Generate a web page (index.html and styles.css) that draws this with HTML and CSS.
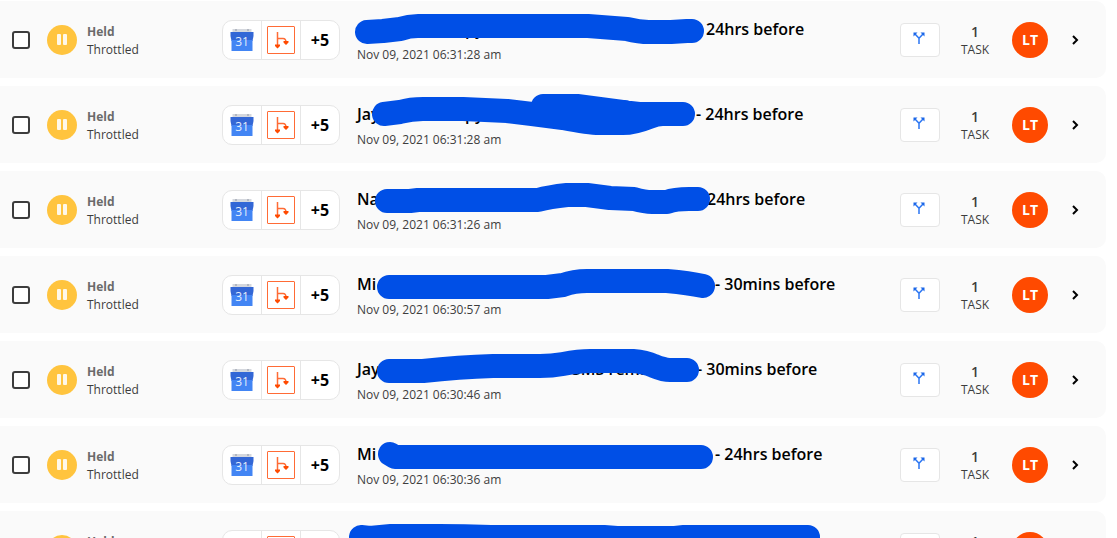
FILE: index.html
```html
<!DOCTYPE html>
<html lang="en">
<head>
    <meta charset="UTF-8">
    <meta name="viewport" content="width=device-width, initial-scale=1.0">
    <title>Task History</title>
    <link rel="stylesheet" href="styles.css">
</head>
<body>
    <!-- Shared icons -->
    <svg class="sprite" aria-hidden="true">
        <symbol id="icon-calendar" viewBox="0 0 24 24">
            <path fill="#d5d8de" d="M2.5 1h19v5h-19z"/>
            <path fill="#b3b8c2" d="M5 1h2v2H5zM17 1h2v2h-2z"/>
            <path fill="#3367d6" d="M.5 4h23v4l-1 5h-21l-1-5z"/>
            <path fill="#4285f4" d="M1.5 12h21v11h-21z"/>
            <text x="12" y="18" text-anchor="middle" class="calendar-day">31</text>
        </symbol>
        <symbol id="icon-path" viewBox="0 0 26 26">
            <path fill="none" stroke="#ff6b35" stroke-width="1.5" d="M9.5 5v14M9.5 11.5h5.5q3 0 3 4"/>
            <path fill="#ff4a00" d="M7 17.5h5v1.5l-2.5 2.5L7 19zM15.500 14h5v1.500l-2.500 2.500-2.500-2.500z"/>
        </symbol>
        <symbol id="icon-split" viewBox="0 0 12 12">
            <path fill="none" stroke="#2a75f3" stroke-width="1.5" d="M2 2l4 4.3V12M6 6.300L10 2"/>
            <path fill="#1a66e8" d="M.5.5h4l-4 4zM11.500.5h-4l4 4z"/>
        </symbol>
        <symbol id="icon-chevron" viewBox="0 0 12 12">
            <path fill="none" stroke="#000" stroke-width="2" d="M4 2l4 4-4 4"/>
        </symbol>
    </svg>

    <main class="runs">
        <div class="run">
            <input type="checkbox" class="run-check" aria-label="Select run">
            <div class="pause"></div>
            <div class="status"><strong>Held</strong><span>Throttled</span></div>
            <div class="apps">
                <span class="app"><svg class="calendar"><use href="#icon-calendar"/></svg></span>
                <span class="app"><svg class="path"><use href="#icon-path"/></svg></span>
                <span class="app">+5</span>
            </div>
            <div class="info">
                <div class="title"><span class="part w-108"></span><span class="part w-241">py</span>24hrs before</div>
                <div class="date">Nov 09, 2021 06:31:28 am</div>
                <svg class="marker" viewBox="0 0 480 77"><path d="M18 31L34 30 51 28Q60 25 69 25H239L278 28Q290 31 300 31H322L338 30H343"/></svg>
            </div>
            <button type="button" class="split" aria-label="Paths"><svg><use href="#icon-split"/></svg></button>
            <div class="tasks"><strong>1</strong><span>TASK</span></div>
            <div class="avatar">LT</div>
            <a href="#" class="open" aria-label="Open run"><svg><use href="#icon-chevron"/></svg></a>
        </div>

        <div class="run">
            <input type="checkbox" class="run-check" aria-label="Select run">
            <div class="pause"></div>
            <div class="status"><strong>Held</strong><span>Throttled</span></div>
            <div class="apps">
                <span class="app"><svg class="calendar"><use href="#icon-calendar"/></svg></span>
                <span class="app"><svg class="path"><use href="#icon-path"/></svg></span>
                <span class="app">+5</span>
            </div>
            <div class="info">
                <div class="title"><span class="part w-108">Jay</span><span class="part w-231">py</span>- 24hrs before</div>
                <div class="date">Nov 09, 2021 06:31:28 am</div>
                <svg class="marker" viewBox="0 0 480 77"><path d="M35 28L51 26Q62 23 74 23H114L158 25 183 28 214 32Q240 37 250 37H274Q285 37 300 31 308 28 314 28H334M194 20H228L281 27 290 28H334M200 26H276"/></svg>
            </div>
            <button type="button" class="split" aria-label="Paths"><svg><use href="#icon-split"/></svg></button>
            <div class="tasks"><strong>1</strong><span>TASK</span></div>
            <div class="avatar">LT</div>
            <a href="#" class="open" aria-label="Open run"><svg><use href="#icon-chevron"/></svg></a>
        </div>

        <div class="run">
            <input type="checkbox" class="run-check" aria-label="Select run">
            <div class="pause"></div>
            <div class="status"><strong>Held</strong><span>Throttled</span></div>
            <div class="apps">
                <span class="app"><svg class="calendar"><use href="#icon-calendar"/></svg></span>
                <span class="app"><svg class="path"><use href="#icon-path"/></svg></span>
                <span class="app">+5</span>
            </div>
            <div class="info">
                <div class="title"><span class="part w-350">Na</span>24hrs before</div>
                <div class="date">Nov 09, 2021 06:31:26 am</div>
                <svg class="marker" viewBox="0 0 480 77"><path d="M38 30H61L69 29H189Q200 26 218 24H238L261 27 285 28Q296 31 303 31H318Q326 28 340 28H349"/></svg>
            </div>
            <button type="button" class="split" aria-label="Paths"><svg><use href="#icon-split"/></svg></button>
            <div class="tasks"><strong>1</strong><span>TASK</span></div>
            <div class="avatar">LT</div>
            <a href="#" class="open" aria-label="Open run"><svg><use href="#icon-chevron"/></svg></a>
        </div>

        <div class="run">
            <input type="checkbox" class="run-check" aria-label="Select run">
            <div class="pause"></div>
            <div class="status"><strong>Held</strong><span>Throttled</span></div>
            <div class="apps">
                <span class="app"><svg class="calendar"><use href="#icon-calendar"/></svg></span>
                <span class="app"><svg class="path"><use href="#icon-path"/></svg></span>
                <span class="app">+5</span>
            </div>
            <div class="info">
                <div class="title"><span class="part w-358">Mi</span>- 30mins before</div>
                <div class="date">Nov 09, 2021 06:30:57 am</div>
                <svg class="marker" viewBox="0 0 480 77"><path d="M40 31H198L214 29Q225 25 238 25H318Q340 27 354 30"/></svg>
            </div>
            <button type="button" class="split" aria-label="Paths"><svg><use href="#icon-split"/></svg></button>
            <div class="tasks"><strong>1</strong><span>TASK</span></div>
            <div class="avatar">LT</div>
            <a href="#" class="open" aria-label="Open run"><svg><use href="#icon-chevron"/></svg></a>
        </div>

        <div class="run">
            <input type="checkbox" class="run-check" aria-label="Select run">
            <div class="pause"></div>
            <div class="status"><strong>Held</strong><span>Throttled</span></div>
            <div class="apps">
                <span class="app"><svg class="calendar"><use href="#icon-calendar"/></svg></span>
                <span class="app"><svg class="path"><use href="#icon-path"/></svg></span>
                <span class="app">+5</span>
            </div>
            <div class="info">
                <div class="title"><span class="part w-215">Jay</span><span class="part w-125">SMS reminder</span>- 30mins before</div>
                <div class="date">Nov 09, 2021 06:30:46 am</div>
                <svg class="marker" viewBox="0 0 480 77"><path d="M40 30H74Q110 26 144 25H191Q203 25 214 23 230 20 241 20H284Q296 21 305 25 315 29 321 29H338"/></svg>
            </div>
            <button type="button" class="split" aria-label="Paths"><svg><use href="#icon-split"/></svg></button>
            <div class="tasks"><strong>1</strong><span>TASK</span></div>
            <div class="avatar">LT</div>
            <a href="#" class="open" aria-label="Open run"><svg><use href="#icon-chevron"/></svg></a>
        </div>

        <div class="run">
            <input type="checkbox" class="run-check" aria-label="Select run">
            <div class="pause"></div>
            <div class="status"><strong>Held</strong><span>Throttled</span></div>
            <div class="apps">
                <span class="app"><svg class="calendar"><use href="#icon-calendar"/></svg></span>
                <span class="app"><svg class="path"><use href="#icon-path"/></svg></span>
                <span class="app">+5</span>
            </div>
            <div class="info">
                <div class="title"><span class="part w-358">Mi</span>- 24hrs before</div>
                <div class="date">Nov 09, 2021 06:30:36 am</div>
                <svg class="marker" viewBox="0 0 480 77"><path d="M41 28L46 31H352"/></svg>
            </div>
            <button type="button" class="split" aria-label="Paths"><svg><use href="#icon-split"/></svg></button>
            <div class="tasks"><strong>1</strong><span>TASK</span></div>
            <div class="avatar">LT</div>
            <a href="#" class="open" aria-label="Open run"><svg><use href="#icon-chevron"/></svg></a>
        </div>

        <div class="run">
            <input type="checkbox" class="run-check" aria-label="Select run">
            <div class="pause"></div>
            <div class="status"><strong>Held</strong><span>Throttled</span></div>
            <div class="apps">
                <span class="app"><svg class="calendar"><use href="#icon-calendar"/></svg></span>
                <span class="app"><svg class="path"><use href="#icon-path"/></svg></span>
                <span class="app">+5</span>
            </div>
            <div class="info">
                <svg class="marker" viewBox="0 0 480 77"><path d="M12 26L21 27 42 25H90Q115 25 142 26L255 26 268 27H326L335 26H459"/></svg>
            </div>
            <button type="button" class="split" aria-label="Paths"><svg><use href="#icon-split"/></svg></button>
            <div class="tasks"><strong>1</strong><span>TASK</span></div>
            <div class="avatar">LT</div>
            <a href="#" class="open" aria-label="Open run"><svg><use href="#icon-chevron"/></svg></a>
        </div>
    </main>
</body>
</html>
```

FILE: styles.css
```css
body {
    font-family: "Open Sans", "Noto Sans", sans-serif;
    background: #fff;
    color: #3d3d3d;
    height: 100vh;
    margin: 0;
    overflow: hidden;
}
.sprite {
    display: none;
}
.runs {
    display: flex;
    flex-direction: column;
    gap: 8px;
    box-sizing: border-box;
    height: 100%;
    overflow: hidden;
    padding: 1px 11px 0 0;
}
.run {
    display: grid;
    grid-template-columns: 35px 40px 135px 135px 1fr 40px 70px 40px 50px;
    align-items: center;
    height: 77px;
    flex-shrink: 0;
    padding: 0 6px 0 12px;
    background: #fafafa;
    border-radius: 0 10px 10px 0;
}
.run-check {
    appearance: none;
    box-sizing: border-box;
    width: 18px;
    height: 18px;
    margin: 0;
    border: 2px solid #3d3d3d;
    border-radius: 3px;
    background: #fff;
}
.pause {
    display: flex;
    justify-content: center;
    align-items: center;
    gap: 2px;
    width: 30px;
    height: 30px;
    border-radius: 50%;
    background: #ffc43e;
}
.pause::before,
.pause::after {
    content: "";
    width: 4px;
    height: 11px;
    border-radius: 1px;
    background: #fff8e8;
}
.status,
.tasks {
    display: flex;
    flex-direction: column;
    padding-top: 2px;
    font-size: 12px;
    line-height: 18px;
}
.status strong {
    color: #6b6b6b;
}
.tasks {
    text-align: center;
}
.tasks strong {
    font-size: 14px;
    font-weight: 600;
}
.apps {
    display: flex;
    box-sizing: border-box;
    width: 118px;
    height: 40px;
    border: 1px solid #e6e6e6;
    border-radius: 10px;
    background: #fff;
}
.app {
    display: flex;
    flex: 1;
    justify-content: center;
    align-items: center;
    color: #000;
    font-size: 16px;
    font-weight: 700;
}
.app + .app {
    border-left: 1px solid #e6e6e6;
}
.calendar {
    width: 24px;
    height: 24px;
}
.calendar-day {
    fill: #e3edfd;
    font-size: 12px;
    font-weight: 400;
}
.path {
    box-sizing: border-box;
    width: 28px;
    height: 28px;
    border: 1px solid #ff6b35;
    border-radius: 1px;
}
.info {
    position: relative;
    box-sizing: border-box;
    height: 77px;
    padding-top: 16px;
    white-space: nowrap;
}
.title {
    color: #000;
    font-size: 16px;
    font-weight: 600;
    line-height: 24px;
}
.part {
    display: inline-block;
}
.w-108 { width: 108px; }
.w-125 { width: 125px; }
.w-215 { width: 215px; }
.w-231 { width: 231px; }
.w-241 { width: 241px; }
.w-350 { width: 350px; }
.w-358 { width: 358px; }
.date {
    margin-top: 5px;
    font-size: 12px;
    line-height: 18px;
}
/* marker stroke drawn over the run name */
.marker {
    position: absolute;
    top: 0;
    left: -8px;
    width: 480px;
    height: 77px;
    fill: none;
    stroke: #004fe6;
    stroke-width: 24px;
    stroke-linecap: round;
    stroke-linejoin: round;
}
.split {
    display: flex;
    justify-content: center;
    align-items: center;
    height: 34px;
    padding: 0 2px 4px 0;
    border: 1px solid #e6e6e6;
    border-radius: 4px;
    background: #fff;
}
.split svg,
.open svg {
    display: block;
    width: 12px;
    height: 12px;
}
.avatar {
    justify-self: center;
    width: 36px;
    border-radius: 50%;
    background: #ff4a00;
    color: #fff;
    font-size: 14px;
    font-weight: 700;
    line-height: 36px;
    text-align: center;
}
.open {
    justify-self: center;
}
```
